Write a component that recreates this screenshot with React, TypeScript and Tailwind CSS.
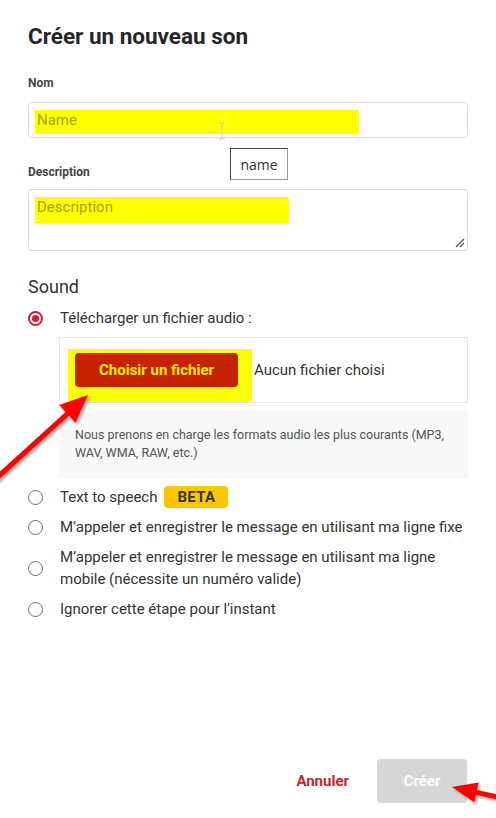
import React from "react";

function Radio({ checked }: { checked?: boolean }) {
  if (checked) {
    return (
      <span className="shrink-0 w-[15px] h-[15px] rounded-full border-2 border-[#cc2030] flex items-center justify-center">
        <span className="w-[7px] h-[7px] rounded-full bg-[#cc2030]" />
      </span>
    );
  }
  return <span className="shrink-0 w-[15px] h-[15px] rounded-full border-[1.5px] border-[#6e6e6e] bg-white" />;
}

function Row({ checked, children }: { checked?: boolean; children: React.ReactNode }) {
  return (
    <div className="flex items-center">
      <Radio checked={checked} />
      <div className="ml-[17px] text-[15px] leading-[22px] text-[#333]">{children}</div>
    </div>
  );
}

export default function App() {
  return (
    <div className="relative w-[496px] h-[818px] bg-white overflow-hidden flex flex-col font-['Roboto',sans-serif]">
      <div className="px-[28px] pt-[22px] flex flex-col">
        <h1 className="text-[22.5px] leading-[28px] font-bold text-[#262626]">Créer un nouveau son</h1>

        <div className="mt-[25px] text-[12px] leading-[16px] font-bold text-[#444]">Nom</div>
        <div className="mt-[11px] h-[36px] border border-[#dadada] rounded-[4px] pl-[6px] pt-[7px]">
          <div className="w-[324px] h-[24px] bg-[#ffff00] pl-[2px] text-[15px] leading-[20px] text-[#a3a300]">Name</div>
        </div>

        <div className="mt-[26px] text-[12px] leading-[16px] font-bold text-[#444]">Description</div>
        <div className="relative mt-[9px] h-[62px] border border-[#dadada] rounded-[4px] pl-[6px] pt-[7px]">
          <div className="w-[254px] h-[26px] bg-[#ffff00] pl-[2px] text-[15px] leading-[20px] text-[#a3a300]">Description</div>
          <svg className="absolute right-[2px] bottom-[2px]" width="10" height="10" viewBox="0 0 10 10">
            <line x1="1" y1="9" x2="9" y2="1" stroke="#555" strokeWidth="1.2" />
            <line x1="5" y1="9" x2="9" y2="5" stroke="#555" strokeWidth="1.2" />
          </svg>
        </div>

        <div className="mt-[24px] text-[18px] leading-[24px] text-[#333]">Sound</div>

        <div className="mt-[8px] flex flex-col gap-2">
          <Row checked>Télécharger un fichier audio :</Row>

          <div className="ml-[31px] h-[66px] border border-[#e6e6e6] pl-[8px] pt-[11px] flex items-start">
            <div className="w-[184px] h-[52px] bg-[#ffff00] pl-[7px] pt-[4px]">
              <div className="w-[163px] h-[34px] rounded-[4px] bg-[#c42200] flex items-center justify-center text-[15px] font-bold text-[#ffe800]">
                Choisir un fichier
              </div>
            </div>
            <div className="ml-[2px] mt-[4px] text-[15px] leading-[34px] text-[#333]">Aucun fichier choisi</div>
          </div>

          <div className="ml-[31px] bg-[#f7f7f7] pl-[16px] pr-[6px] pt-[15px] pb-[16px] text-[12.5px] leading-[18px] text-[#555]">
            Nous prenons en charge les formats audio les plus courants (MP3, WAV, WMA, RAW, etc.)
          </div>

          <Row>
            <span className="flex items-center">
              Text to speech
              <span className="ml-[7px] h-[22px] px-[13px] rounded-[4px] bg-[#ffc600] text-[15px] font-bold leading-[22px] text-[#333] tracking-[0.3px]">
                BETA
              </span>
            </span>
          </Row>
          <Row>M’appeler et enregistrer le message en utilisant ma ligne fixe</Row>
          <Row>M’appeler et enregistrer le message en utilisant ma ligne mobile (nécessite un numéro valide)</Row>
          <Row>Ignorer cette étape pour l'instant</Row>
        </div>
      </div>

      <div className="mt-auto flex justify-end items-center gap-[28px] pr-[29px] pb-[15px]">
        <span className="text-[15px] font-bold text-[#c9232d]">Annuler</span>
        <div className="w-[90px] h-[44px] rounded-[4px] bg-[#d6d6d6] flex items-center justify-center text-[15px] font-bold text-white">
          Créer
        </div>
      </div>

      {/* tooltip */}
      <div className="absolute left-[230px] top-[148px] w-[58px] h-[32px] bg-white border border-t-[#444] border-l-[#444] border-r-[#9a9a9a] border-b-[#9a9a9a] flex items-center justify-center text-[14px] text-[#333] font-['Open_Sans',sans-serif]">
        name
      </div>

      {/* I-beam cursor */}
      <svg className="absolute left-[218px] top-[122px]" width="8" height="18" viewBox="0 0 8 18">
        <path d="M1 1 H3 M5 1 H7 M4 1.5 V16.5 M1 17 H3 M5 17 H7 M3 1 L4 2 L5 1 M3 17 L4 16 L5 17" stroke="#c8c8c8" strokeWidth="1" fill="none" />
      </svg>

      {/* annotation arrows */}
      <svg className="absolute inset-0 pointer-events-none" width="496" height="818" viewBox="0 0 496 818">
        <defs>
          <filter id="sh" x="-20%" y="-20%" width="140%" height="140%">
            <feDropShadow dx="2" dy="2" stdDeviation="1.5" floodColor="#000" floodOpacity="0.35" />
          </filter>
        </defs>
        <polygon
          filter="url(#sh)"
          fill="#ff0000"
          points="88,395 59.2,404.9 65.6,411.9 -17.3,487.3 -13.9,491.1 69,415.7 75.4,422.7"
        />
        <polygon
          filter="url(#sh)"
          fill="#ff0000"
          points="452,787 478.6,782.6 476.9,790 531,802 530,806.8 475.9,794.8 474.2,802.2"
        />
      </svg>
    </div>
  );
}
